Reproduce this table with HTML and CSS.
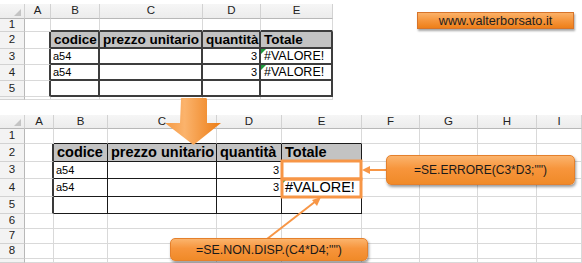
FILE: index.html
```html
<!DOCTYPE html>
<html lang="it">
<head>
<meta charset="utf-8">
<title>SE.ERRORE</title>
<link rel="stylesheet" href="styles.css">
</head>
<body>
<div class="page">
  <div class="top">
    <div class="sheet sheet-top">
      <div class="ch corner"></div><div class="ch">A</div><div class="ch">B</div><div class="ch">C</div><div class="ch">D</div><div class="ch">E</div>
      <div class="rh">1</div><div class="c"></div><div class="c tt"></div><div class="c tt"></div><div class="c tt"></div><div class="c tt"></div>
      <div class="rh">2</div><div class="c tl"></div><div class="c t th">codice</div><div class="c t th">prezzo unitario</div><div class="c t th">quantità</div><div class="c t th">Totale</div>
      <div class="rh">3</div><div class="c tl"></div><div class="c t">a54</div><div class="c t"></div><div class="c t num">3</div><div class="c t err">#VALORE!</div>
      <div class="rh">4</div><div class="c tl"></div><div class="c t">a54</div><div class="c t"></div><div class="c t num">3</div><div class="c t err">#VALORE!</div>
      <div class="rh">5</div><div class="c tl"></div><div class="c t"></div><div class="c t"></div><div class="c t"></div><div class="c t"></div>
      <div class="rh part">6</div><div class="c"></div><div class="c"></div><div class="c"></div><div class="c"></div><div class="c"></div>
    </div>
    <div class="site">www.valterborsato.it</div>
  </div>

  <div class="sheet sheet-bottom">
    <div class="ch corner"></div><div class="ch">A</div><div class="ch">B</div><div class="ch">C</div><div class="ch">D</div><div class="ch">E</div><div class="ch">F</div><div class="ch">G</div><div class="ch">H</div><div class="ch">I</div>
    <div class="rh">1</div><div class="c"></div><div class="c tt"></div><div class="c tt"></div><div class="c tt"></div><div class="c tt"></div><div class="c"></div><div class="c"></div><div class="c"></div><div class="c"></div>
    <div class="rh">2</div><div class="c tl"></div><div class="c t th">codice</div><div class="c t th">prezzo unitario</div><div class="c t th">quantità</div><div class="c t th">Totale</div><div class="c"></div><div class="c"></div><div class="c"></div><div class="c"></div>
    <div class="rh">3</div><div class="c tl"></div><div class="c t">a54</div><div class="c t"></div><div class="c t num">3</div><div class="c t big"></div><div class="c"></div><div class="c"></div><div class="c"></div><div class="c"></div>
    <div class="rh">4</div><div class="c tl"></div><div class="c t">a54</div><div class="c t"></div><div class="c t num">3</div><div class="c t big err">#VALORE!</div><div class="c"></div><div class="c"></div><div class="c"></div><div class="c"></div>
    <div class="rh">5</div><div class="c tl"></div><div class="c t"></div><div class="c t"></div><div class="c t"></div><div class="c t"></div><div class="c"></div><div class="c"></div><div class="c"></div><div class="c"></div>
    <div class="rh">6</div><div class="c"></div><div class="c"></div><div class="c"></div><div class="c"></div><div class="c"></div><div class="c"></div><div class="c"></div><div class="c"></div><div class="c"></div>
    <div class="rh">7</div><div class="c"></div><div class="c"></div><div class="c"></div><div class="c"></div><div class="c"></div><div class="c"></div><div class="c"></div><div class="c"></div><div class="c"></div>
    <div class="rh">8</div><div class="c"></div><div class="c"></div><div class="c"></div><div class="c"></div><div class="c"></div><div class="c"></div><div class="c"></div><div class="c"></div><div class="c"></div>
    <div class="rh part">9</div><div class="c"></div><div class="c"></div><div class="c"></div><div class="c"></div><div class="c"></div><div class="c"></div><div class="c"></div><div class="c"></div><div class="c"></div>
  </div>

  <svg class="overlay" width="582" height="263" viewBox="0 0 582 263" aria-hidden="true">
    <defs>
      <linearGradient id="ag" x1="0" y1="0" x2="1" y2="0">
        <stop offset="0" stop-color="#f59a45"/>
        <stop offset="0.35" stop-color="#fbb36c"/>
        <stop offset="1" stop-color="#ec7c14"/>
      </linearGradient>
    </defs>
    <path d="M181 99 Q180 98 182 98 H206 Q207 98 207 100 V123 H221 L193.5 145 L165 123 H180 Z" fill="url(#ag)"/>
    <rect x="282" y="161" width="79" height="18" fill="none" stroke="#f79646" stroke-width="3"/>
    <rect x="282" y="179" width="79" height="18" fill="none" stroke="#f79646" stroke-width="3"/>
    <line x1="387" y1="170" x2="368" y2="170" stroke="#f79646" stroke-width="2"/>
    <path d="M362 170 L370 166 L370 174 Z" fill="#f79646"/>
    <line x1="267" y1="239" x2="316" y2="201" stroke="#f79646" stroke-width="2"/>
    <path d="M321 197 L312 200 L317 206 Z" fill="#f79646"/>
  </svg>
  <div class="callout callout-1">=SE.ERRORE(C3*D3;"")</div>
  <div class="callout callout-2">=SE.NON.DISP.(C4*D4;"")</div>
</div>
</body>
</html>
```
FILE: styles.css
```css
* { box-sizing: border-box; }
html, body { margin: 0; padding: 0; background: #fff; }
body { font-family: "Liberation Sans", Arial, sans-serif; color: #000; }
.page { position: relative; width: 582px; height: 263px; overflow: hidden; }

.top { display: flex; align-items: flex-start; padding-top: 4px; height: 100px; }

.sheet { display: grid; }
.sheet-top {
  grid-template-columns: 25px 26px 49px 103px 58px 72px;
  grid-template-rows: 15px 13px 17px 16px 16px 16px 3px;
  width: 333px; overflow: hidden;
}
.sheet-bottom {
  margin-top: 15px;
  grid-template-columns: 25px 29px 54px 109px 65px 80px 58px 58px 59px 45px;
  grid-template-rows: 14px 15px 18px 17px 18px 17px 15px 15px 15px 4px;
  width: 582px; overflow: hidden;
}

.ch {
  background: linear-gradient(#f6f6f6, #ececec);
  border-right: 1px solid #d2d2d2;
  border-bottom: 1px solid #b8b8b8;
  font-size: 11.5px; color: #222;
  display: flex; align-items: center; justify-content: center;
  line-height: 1;
}
.corner { position: relative; }
.corner::after {
  content: ""; position: absolute; right: 3px; bottom: 2px;
  border-style: solid; border-width: 0 0 7px 7px;
  border-color: transparent transparent #c4c4c4 transparent;
}
.rh {
  background: #f3f3f3;
  border-right: 1px solid #b8b8b8;
  border-bottom: 1px solid #d2d2d2;
  font-size: 11.5px; color: #222;
  display: flex; align-items: center; justify-content: center;
  line-height: 1; overflow: hidden;
}
.rh.part { align-items: flex-start; padding-top: 1px; line-height: 12px; }
.c {
  border-right: 1px solid #d9d9d9;
  border-bottom: 1px solid #d9d9d9;
  font-size: 11px; line-height: 1;
  display: flex; align-items: center;
  padding: 0 2px; white-space: nowrap; overflow: hidden;
  position: relative;
}
.sheet-top .t { border-right: 2px solid #3d3d3d; border-bottom: 2px solid #3d3d3d; }
.sheet-top .tl { border-right: 2px solid #3d3d3d; }
.sheet-top .tt { border-bottom: 2px solid #3d3d3d; }
.sheet-bottom .t { border-right: 1px solid #1a1a1a; border-bottom: 1px solid #1a1a1a; }
.sheet-bottom .tl { border-right: 2px solid #3a3a3a; }
.sheet-bottom .tt { border-bottom: 1px solid #1a1a1a; }

.th { background: #c3c3c3; font-weight: bold; font-size: 13.5px; padding-left: 3px; }
.sheet-bottom .th { font-size: 14.5px; }
.num { justify-content: flex-end; padding-right: 2px; }
.err { font-size: 12.5px; padding-left: 3px; }
.big { font-size: 14.5px; }
.err::before {
  content: ""; position: absolute; left: 0; top: 0;
  border-style: solid; border-width: 5px 5px 0 0;
  border-color: #1f9a3c transparent transparent transparent;
}

.site {
  margin-left: 84px; margin-top: 8px;
  width: 157px; height: 17px;
  background: linear-gradient(#fbb168, #f59338 55%, #ee7f19);
  border: 1px solid #d7742a;
  box-shadow: 1px 2px 2px rgba(0,0,0,0.35);
  font-size: 12.7px; color: #1e1e1e;
  display: flex; align-items: center; justify-content: center;
}

.overlay { position: absolute; left: 0; top: 0; }

.callout {
  position: absolute;
  background: linear-gradient(#fbb46d, #f7953c 45%, #f08a28);
  border: 1px solid #e4802c;
  border-radius: 5px;
  box-shadow: 1px 2px 3px rgba(0,0,0,0.4);
  color: #1a1a1a;
  display: flex; align-items: center; justify-content: center;
  white-space: nowrap;
}
.callout-1 { left: 386px; top: 155px; width: 189px; height: 30px; font-size: 12px; }
.callout-2 { left: 170px; top: 238px; width: 198px; height: 23px; font-size: 12.4px; }
```
